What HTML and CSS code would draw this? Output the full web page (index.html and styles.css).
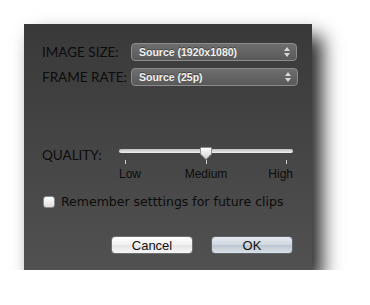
FILE: index.html
```html
<!DOCTYPE html>
<html lang="en">
<head>
    <meta charset="UTF-8">
    <title>Export Settings</title>
    <link rel="stylesheet" href="styles.css">
</head>
<body>
    <div class="dialog">
        <div class="field">
            <span class="label">IMAGE SIZE:</span>
            <div class="popup">
                <span>Source (1920x1080)</span>
                <svg class="arrows" width="6" height="10" viewBox="0 0 6 10"><path d="M3 0 L6 4 H0 Z M3 10 L6 6 H0 Z" fill="#d8d8d8"/></svg>
            </div>
        </div>
        <div class="field">
            <span class="label">FRAME RATE:</span>
            <div class="popup">
                <span>Source (25p)</span>
                <svg class="arrows" width="6" height="10" viewBox="0 0 6 10"><path d="M3 0 L6 4 H0 Z M3 10 L6 6 H0 Z" fill="#d8d8d8"/></svg>
            </div>
        </div>

        <div class="quality">
            <span class="label quality-label">QUALITY:</span>
            <div class="slider">
                <div class="track-area">
                    <div class="track"></div>
                    <svg class="thumb" style="left: 81px;" width="12" height="13" viewBox="0 0 12 13">
                        <defs>
                            <linearGradient id="knob" x1="0" y1="0" x2="0" y2="1">
                                <stop offset="0" stop-color="#ffffff"/>
                                <stop offset="1" stop-color="#cfcfcf"/>
                            </linearGradient>
                        </defs>
                        <path d="M1.5 0.5 H10.5 Q11.5 0.5 11.5 1.5 V7 L6 12.5 L0.5 7 V1.5 Q0.5 0.5 1.5 0.5 Z" fill="url(#knob)" stroke="#8c8c8c" stroke-width="1"/>
                    </svg>
                </div>
                <div class="ticks"><i></i><i></i><i></i></div>
                <div class="tick-labels">
                    <span>Low</span>
                    <span>Medium</span>
                    <span>High</span>
                </div>
            </div>
        </div>

        <label class="remember">
            <span class="check"></span>
            Remember setttings for future clips
        </label>

        <div class="buttons">
            <button type="button" class="btn">Cancel</button>
            <button type="button" class="btn default">OK</button>
        </div>
    </div>
</body>
</html>
```

FILE: styles.css
```css
body {
    margin: 0;
    background-color: #ffffff;
    font-family: "Liberation Sans", Arial, sans-serif;
}
.dialog {
    box-sizing: border-box;
    width: 288px;
    height: 246px;
    margin: 24px 0 0 24px;
    padding: 19px 19px 0 18px;
    background: linear-gradient(#393939, #515151);
    box-shadow: 10px 12px 18px rgba(0, 0, 0, 0.85);
}
.label {
    flex-shrink: 0;
    font-family: Lato, "Liberation Sans", sans-serif;
    font-size: 13.5px;
    color: #0c0c0c;
    line-height: 18px;
}
.field {
    display: flex;
    align-items: center;
    height: 18px;
}
.field + .field {
    margin-top: 7px;
}
.field .label {
    width: 89px;
}
.popup {
    flex-shrink: 0;
    box-sizing: border-box;
    width: 166px;
    height: 18px;
    display: flex;
    align-items: center;
    justify-content: space-between;
    padding: 0 6px 0 7px;
    border: 1px solid #8c8c8c;
    border-radius: 4px;
    background: linear-gradient(#6e6e6e, #595959);
    color: #f2f2f2;
    font-size: 10.5px;
    font-weight: bold;
    text-shadow: 0 -1px 0 rgba(0, 0, 0, 0.4);
}
.field + .field .popup {
    width: 167px;
}
.arrows {
    display: block;
}
.quality {
    display: flex;
    margin-top: 60px;
}
.quality-label {
    width: 77px;
}
.slider {
    width: 174px;
}
.track-area {
    position: relative;
    height: 11px;
    padding-top: 3px;
}
.track {
    height: 4px;
    border-radius: 2px;
    background: linear-gradient(#bdbdbd, #f2f2f2);
}
.thumb {
    position: absolute;
    top: 1px;
}
.ticks {
    display: flex;
    justify-content: space-between;
    height: 4px;
    padding: 0 6px;
}
.ticks i {
    width: 1px;
    background-color: #cfcfcf;
}
.tick-labels {
    display: grid;
    grid-template-columns: 1fr auto 1fr;
    margin-top: 4px;
    font-size: 12px;
    line-height: 12px;
    color: #0c0c0c;
}
.tick-labels span:first-child {
    justify-self: start;
}
.tick-labels span:last-child {
    justify-self: end;
}
.remember {
    display: flex;
    align-items: center;
    gap: 6px;
    margin-top: 15px;
    height: 13px;
    font-family: "DejaVu Sans", sans-serif;
    font-size: 12.5px;
    color: #0c0c0c;
}
.check {
    box-sizing: border-box;
    width: 12px;
    height: 12px;
    margin-left: 1px;
    border: 1px solid #8a8a8a;
    border-radius: 3px;
    background: linear-gradient(#ffffff, #dedede);
}
.buttons {
    display: flex;
    justify-content: flex-end;
    gap: 18px;
    margin-top: 28px;
}
.btn {
    box-sizing: border-box;
    width: 82px;
    height: 18px;
    padding: 0;
    border: 1px solid #6f6f6f;
    border-radius: 4px;
    background: linear-gradient(#ffffff, #f0f0f0 50%, #e4e4e4 51%, #f6f6f6);
    font-family: "Liberation Sans", Arial, sans-serif;
    font-size: 13px;
    color: #111111;
}
.btn.default {
    border-color: #5c636b;
    background: linear-gradient(#e4e9ee, #d0d7df 50%, #bcc5cf 51%, #dbe1e8);
}
```
